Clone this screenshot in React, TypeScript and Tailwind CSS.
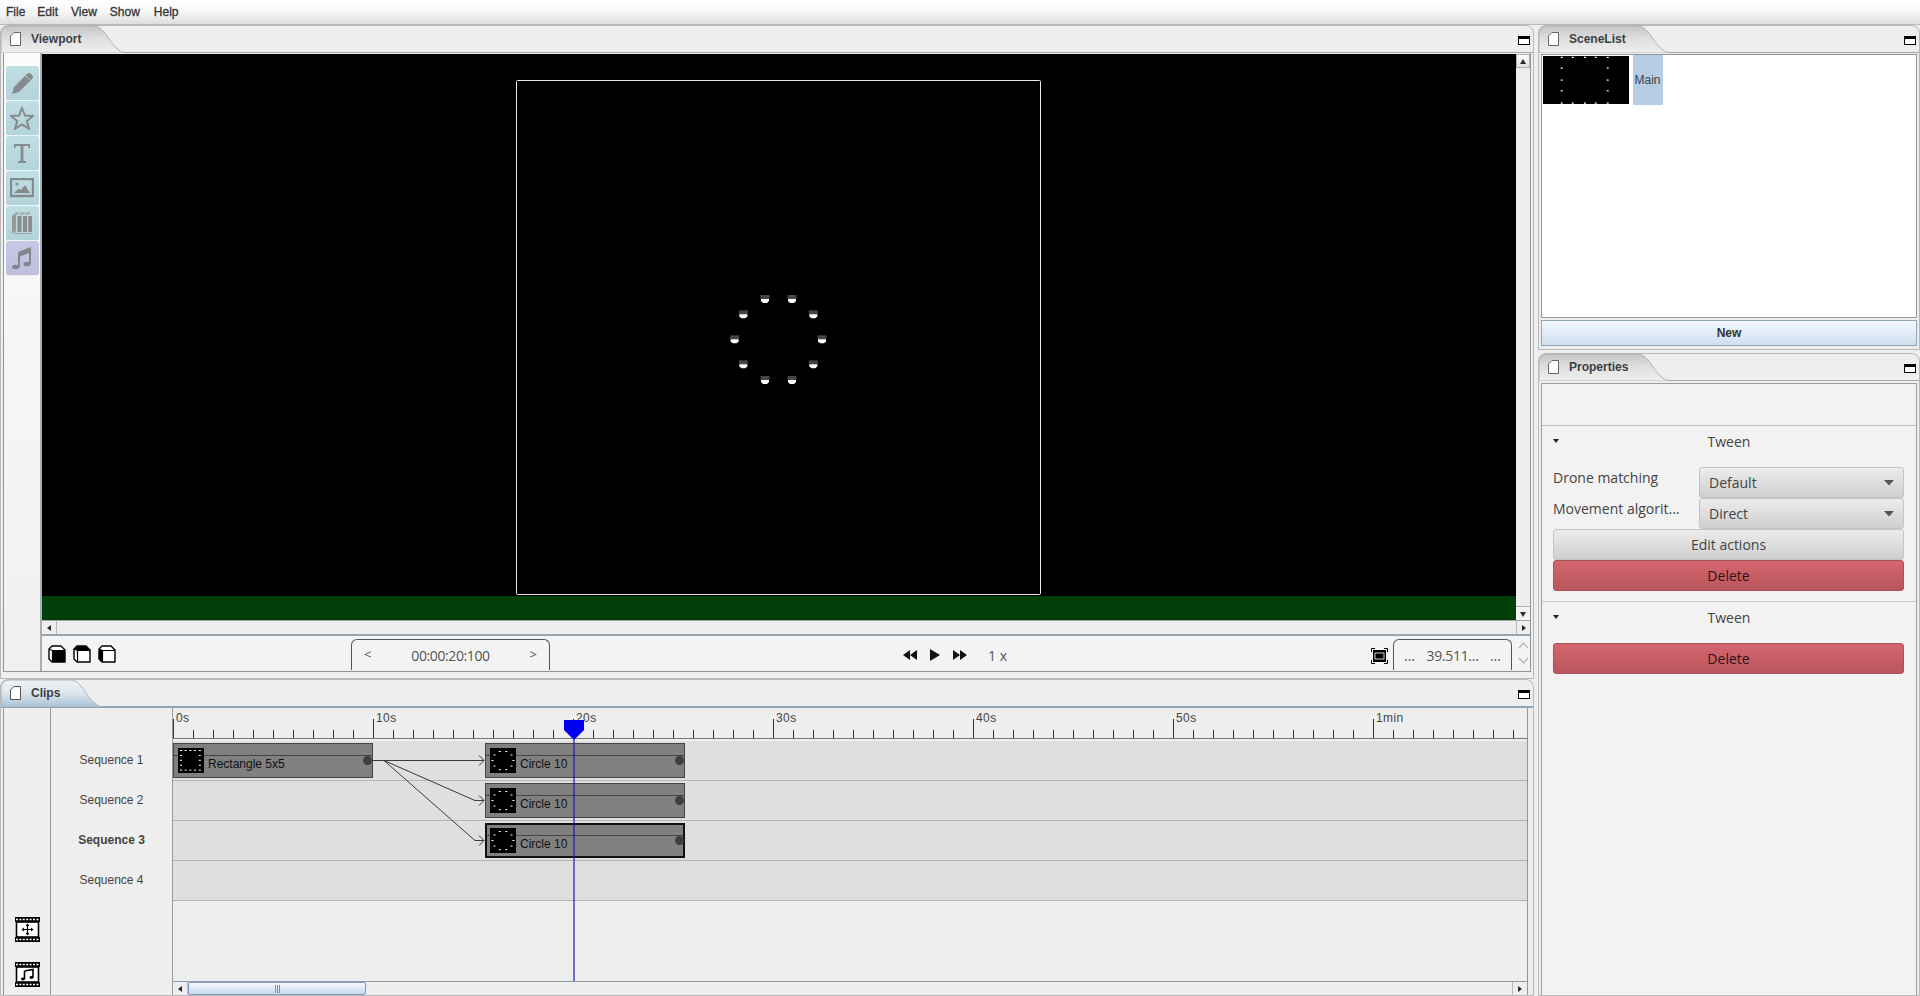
import React from "react";

const ui = "font-['Open_Sans',sans-serif]";

function DocIcon({ active = false }: { active?: boolean }) {
  return (
    <svg width="11" height="14" viewBox="0 0 11 14" className="shrink-0">
      <path d="M0.5 4 L4 0.5 H10.5 V13.5 H0.5 Z" fill="#fff" stroke={active ? "#555" : "#666"} strokeWidth="1" />
    </svg>
  );
}

function MinIcon() {
  return <div className="h-[9px] w-[12px] border border-black border-t-[3px] bg-white" />;
}

function Tab({ label, width, active = false, gid }: { label: string; width: number; active?: boolean; gid: string }) {
  const w = width;
  return (
    <div className="relative flex h-full items-center pl-[9px]" style={{ width: w }}>
      <svg width={w} height="27" className="absolute left-0 top-0">
        <defs>
          <linearGradient id={gid} x1="0" x2="0" y1="0" y2="1">
            <stop offset="0" stopColor={active ? "#eef3f6" : "#c4c4c4"} />
            <stop offset="0.45" stopColor={active ? "#dfe8ee" : "#dedede"} />
            <stop offset="1" stopColor={active ? "#a9c3d6" : "#f0f0f0"} />
          </linearGradient>
        </defs>
        <path
          d={`M0 27 V9 Q0 0 9 0 H${w - 30} C${w - 18} 2 ${w - 14} 24 ${w} 27 Z`}
          fill={`url(#${gid})`}
          stroke="#b4b4b4"
          strokeWidth="1"
        />
      </svg>
      <div className="relative flex items-center gap-[10px]">
        <DocIcon active={active} />
        <span className="text-[12px] font-bold text-[#3a3f45]">{label}</span>
      </div>
    </div>
  );
}

function Dock({
  label,
  tabWidth,
  active = false,
  className,
  gid,
  children,
}: {
  label: string;
  tabWidth: number;
  active?: boolean;
  className: string;
  gid: string;
  children: React.ReactNode;
}) {
  return (
    <div className={`flex flex-col rounded-t-[8px] border border-[#b8b8b8] bg-[#eeeeee] ${className}`}>
      <div
        className={`flex shrink-0 items-start justify-between ${
          active ? "h-[28px] border-b-[2px] border-[#8fa5b8]" : "h-[27px] border-b border-[#a2a9af]"
        }`}
      >
        <Tab label={label} width={tabWidth} active={active} gid={gid} />
        <div className="mr-[3px] mt-[10px]">
          <MinIcon />
        </div>
      </div>
      <div className="flex min-h-0 flex-1 flex-col px-[2px]">{children}</div>
    </div>
  );
}

function Tri({ dir, size = 8 }: { dir: "u" | "d" | "l" | "r"; size?: number }) {
  const p = { u: "M1 7 L4 2 L7 7Z", d: "M1 2 L7 2 L4 7Z", l: "M6 1 L6 7 L2 4Z", r: "M2 1 L2 7 L6 4Z" }[dir];
  return (
    <svg width={size} height={size} viewBox="0 0 8 8">
      <path d={p} fill="#2a2a2a" />
    </svg>
  );
}

function Pencil() {
  return (
    <svg width="24" height="24" viewBox="0 0 24 24">
      <path d="M2 23 L4 16 L17 3 Q19 1 21 3 L22 4 Q24 6 22 8 L9 21 Z" fill="#858a8c" />
      <path d="M15.5 4.5 L20.5 9.5" stroke="#b8d6dc" strokeWidth="1" />
    </svg>
  );
}
function Star() {
  return (
    <svg width="24" height="24" viewBox="0 0 24 24">
      <path d="M12 2 L15 9.5 L23 10 L16.8 15 L19 22.8 L12 18.4 L5 22.8 L7.2 15 L1 10 L9 9.5 Z" fill="none" stroke="#858a8c" strokeWidth="2" />
    </svg>
  );
}
function TIcon() {
  return (
    <svg width="24" height="24" viewBox="0 0 24 24">
      <path d="M4 7 V3 H20 V7 H18.4 V5 H13.4 V20 H16 V22 H8 V20 H10.6 V5 H5.6 V7 Z" fill="#858a8c" />
    </svg>
  );
}
function ImageIcon() {
  return (
    <svg width="24" height="20" viewBox="0 0 24 20">
      <rect x="1" y="1" width="22" height="17" fill="none" stroke="#858a8c" strokeWidth="2.4" />
      <circle cx="7" cy="6" r="1.6" fill="#858a8c" />
      <path d="M4 15 L9 10.5 L11 12 L15 7 L20 15 Z" fill="#858a8c" />
    </svg>
  );
}
function FilmStack() {
  return (
    <svg width="22" height="24" viewBox="0 0 22 24">
      <path d="M1 5 L5 1 V20 L1 23 Z" fill="#97999b" />
      <path d="M6.5 5 H10.5 V21 H6.5 Z M12 5 H16 V21 H12 Z M17.2 5 H21 V21 H17.2 Z" fill="#8a8d8f" />
      <path d="M5 1 H9 L6.5 4 H2 Z M10.6 1 H14.6 L12 4 H8 Z M16 1 H20 L17.2 4 H13.4 Z" fill="#aaaeb0" />
      <path d="M4 22.5 H21" stroke="#8a8d8f" strokeDasharray="1.5 1" strokeWidth="1" />
    </svg>
  );
}
function Music() {
  return (
    <svg width="22" height="24" viewBox="0 0 22 24">
      <path d="M7 6 L20 1 V18 H18 V7 L9 10.5 V21 H7 Z" fill="#858590" />
      <ellipse cx="4.6" cy="21" rx="3.6" ry="2.2" fill="#858590" />
      <ellipse cx="16" cy="18" rx="3.6" ry="2.2" fill="#858590" />
    </svg>
  );
}

function ToolBtn({ children, music = false }: { children: React.ReactNode; music?: boolean }) {
  return (
    <div
      className={`flex h-[35px] w-[33px] items-center justify-center rounded-[3px] border-b border-white/70 ${
        music ? "bg-[linear-gradient(#c9c9e6,#bdbddd)]" : "bg-[linear-gradient(#c0dfe4,#b3d3da)]"
      }`}
    >
      {children}
    </div>
  );
}

function Cube({ mode }: { mode: number }) {
  return (
    <svg width="18" height="18" viewBox="0 0 18 18">
      <path d="M1 4 L4 1 H13 L17 5 V17 H4 L1 14 Z" fill="#fff" stroke="#000" strokeWidth="1.4" strokeLinejoin="round" />
      <path d="M1 4 L4.5 5.5 H17 M4.5 5.5 V17" fill="none" stroke="#000" strokeWidth="1.2" />
      {mode === 0 && <rect x="5" y="6" width="12" height="11" fill="#000" />}
      {mode === 1 && <path d="M1 4 L4 1 H13 L17 5 H4.5 Z" fill="#000" />}
      {mode === 2 && <path d="M1 4 L4.5 5.5 V17 L1 14 Z" fill="#000" />}
    </svg>
  );
}

function Rewind({ flip = false }: { flip?: boolean }) {
  return (
    <svg width="14" height="10" viewBox="0 0 14 10" className={flip ? "-scale-x-100" : ""}>
      <path d="M7 0 V10 L0 5 Z M14 0 V10 L7 5 Z" fill="#111" />
    </svg>
  );
}

function FitIcon() {
  return (
    <svg width="17" height="16" viewBox="0 0 17 16">
      <path d="M0.5 4 V0.5 H4 M13 0.5 H16.5 V4 M16.5 12 V15.5 H13 M4 15.5 H0.5 V12" fill="none" stroke="#000" />
      <rect x="2.5" y="2.5" width="12" height="11" fill="#000" stroke="#000" />
      <rect x="4" y="5" width="9" height="6" fill="#000" stroke="#fff" strokeWidth="0.8" />
    </svg>
  );
}

const drones: [number, number][] = [
  [195, 57], [276, 57], [130, 103], [340, 103], [104, 178],
  [366, 178], [130, 253], [340, 253], [195, 300], [276, 300],
];

function Viewport() {
  return (
    <div className="relative flex min-w-0 flex-1 flex-col bg-black">
      <div className="flex-1" />
      <div className="h-[24px] bg-[#003f0a]" />
      <svg width="1474" height="566" className="absolute left-0 top-0">
        <rect x="474.5" y="26.5" width="524" height="514" rx="1" fill="none" stroke="#e8e8e8" />
        {drones.map(([zx, zy], i) => {
          const cx = 700 + zx / 3 - 42;
          const cy = 280 + zy / 3 - 54;
          return (
            <g key={i}>
              <rect x={cx - 4.5} y={cy - 4} width="9" height="4" fill="#454545" />
              <path d={`M${cx - 4} ${cy} H${cx + 4} V${cy + 2} L${cx + 2} ${cy + 4} H${cx - 2} L${cx - 4} ${cy + 2} Z`} fill="#fff" />
            </g>
          );
        })}
      </svg>
    </div>
  );
}

function ViewportDock() {
  const tools = [<Pencil />, <Star />, <TIcon />, <ImageIcon />, <FilmStack />];
  return (
    <div className="flex h-[619px] border-x border-b border-[#8f979e]">
      <div className="flex w-[38px] shrink-0 flex-col items-center border-r-[2px] border-[#a9afb4] bg-[linear-gradient(#fbfbfb,#f0f0f0)] pt-[13px]">
        {tools.map((t, i) => (
          <ToolBtn key={i}>{t}</ToolBtn>
        ))}
        <ToolBtn music>
          <Music />
        </ToolBtn>
      </div>
      <div className="flex min-w-0 flex-1 flex-col pt-[1px]">
        <div className="flex h-[566px]">
          <Viewport />
          <div className="flex w-[14px] shrink-0 flex-col justify-between bg-[#eeeeee]">
            <div className="flex h-[14px] items-center justify-center border border-[#aab0b6] bg-[linear-gradient(#fdfdfd,#e0e0e0)]">
              <Tri dir="u" />
            </div>
            <div className="flex h-[14px] items-center justify-center border-t border-[#aab0b6] bg-[#f4f4f4]">
              <Tri dir="d" />
            </div>
          </div>
        </div>
        <div className="flex h-[16px] shrink-0 justify-between border-b-[2px] border-t border-[#9aa4ac] bg-[#eeeeee]">
          <div className="flex w-[15px] items-center justify-center border-r border-[#b5bbc0]">
            <Tri dir="l" />
          </div>
          <div className="flex w-[14px] items-center justify-center border-l border-[#b5bbc0]">
            <Tri dir="r" />
          </div>
        </div>
        <div className={`flex h-[34px] items-center bg-[#f4f4f4] ${ui}`}>
          <div className="ml-[6px] mt-[2px] flex gap-[7px]">
            <Cube mode={0} />
            <Cube mode={1} />
            <Cube mode={2} />
          </div>
          <div className="ml-[235px] flex h-[31px] w-[199px] items-center justify-between self-end rounded-t-[6px] border-x border-t border-[#555] px-[12px] text-[13px] text-[#555]">
            <span>&lt;</span>
            <span className="text-[14px] tracking-[-0.4px]">00:00:20:100</span>
            <span>&gt;</span>
          </div>
          <div className="ml-[353px] mt-[4px] flex items-center gap-[13px]">
            <Rewind />
            <svg width="10" height="12" viewBox="0 0 10 12">
              <path d="M0 0 V12 L10 6 Z" fill="#111" />
            </svg>
            <Rewind flip />
          </div>
          <span className="ml-[21px] mt-[4px] w-[18px] whitespace-nowrap text-[14px] text-[#555]">1 x</span>
          <div className="ml-[365px] mt-[5px]">
            <FitIcon />
          </div>
          <div className="ml-[5px] flex h-[31px] w-[119px] items-center justify-between self-end rounded-t-[6px] border-x border-t border-[#555] px-[10px] text-[14px] text-[#555]">
            <span>...</span>
            <span className="tracking-[-0.3px]">39.511...</span>
            <span>...</span>
          </div>
          <div className="ml-[5px] flex h-full w-[13px] flex-col justify-between py-[5px]">
            <svg width="13" height="8" viewBox="0 0 13 8">
              <path d="M2 7 L6.5 2 L11 7" fill="none" stroke="#b5b5b5" strokeWidth="1.2" />
            </svg>
            <svg width="13" height="8" viewBox="0 0 13 8">
              <path d="M2 1 L6.5 6 L11 1" fill="none" stroke="#b5b5b5" strokeWidth="1.2" />
            </svg>
          </div>
        </div>
      </div>
    </div>
  );
}

function Thumb({ kind }: { kind: "rect" | "circle" }) {
  const pts: [number, number][] = [];
  if (kind === "rect") {
    for (let i = 0; i < 5; i++)
      for (let j = 0; j < 5; j++) if (i === 0 || j === 0 || i === 4 || j === 4) pts.push([3 + i * 4.7, 2.5 + j * 4.9]);
  } else {
    for (let i = 0; i < 10; i++) {
      const a = (Math.PI * 2 * (i + 0.5)) / 10;
      pts.push([13 + 10.5 * Math.sin(a), 12.5 + 9.5 * Math.cos(a)]);
    }
  }
  return (
    <svg width="26" height="25" viewBox="0 0 26 25" className="shrink-0">
      <rect width="26" height="25" fill="#000" />
      {pts.map(([x, y], i) => (
        <rect key={i} x={x - 1} y={y - 0.5} width="2" height="1" fill="#fff" />
      ))}
    </svg>
  );
}

function Clip({ kind, label, left, width, selected = false }: { kind: "rect" | "circle"; label: string; left: string; width: string; selected?: boolean }) {
  return (
    <div
      className={`absolute top-[2px] h-[35px] ${left} ${width} bg-[#808080] ${
        selected ? "border-[2px] border-[#111]" : "border border-[#444]"
      }`}
    >
      <div className={`absolute inset-x-0 h-px bg-[#444] ${selected ? "top-[10px]" : "top-[11px]"}`} />
      <div className={`absolute h-[9px] w-[9px] rounded-full bg-[#3f3f3f] ${selected ? "right-[-1px] top-[11px]" : "right-0 top-[12px]"}`} />
      <div className={`relative flex items-center ${selected ? "pl-[3px] pt-[3px]" : "pl-[4px] pt-[4px]"}`}>
        <Thumb kind={kind} />
        <span className="ml-[4px] mt-[6px] text-[12px] text-[#111]">{label}</span>
      </div>
    </div>
  );
}

function FilmFrame({ children }: { children: React.ReactNode }) {
  return (
    <svg width="25" height="25" viewBox="0 0 25 25">
      <rect x="0" y="0" width="25" height="5" fill="#000" />
      <rect x="0" y="20" width="25" height="5" fill="#000" />
      <path d="M1 2.5 H24 M1 22.5 H24" stroke="#fff" strokeWidth="1.4" strokeDasharray="2 1.4" />
      <rect x="1.5" y="5" width="22" height="15" fill="#fff" stroke="#000" strokeWidth="1.6" />
      {children}
    </svg>
  );
}

const ticks = ["0s", "10s", "20s", "30s", "40s", "50s", "1min"];

function ClipsPanel() {
  return (
    <div className="flex min-h-0 flex-1 border-l border-[#8f979e]">
      <div className="flex w-[46px] shrink-0 flex-col items-center justify-end gap-[20px] pb-[8px]">
        <FilmFrame>
          <path d="M12.5 7 V18 M7 12.5 H18" stroke="#000" strokeWidth="1.2" />
          <path d="M12.5 6.5 L10.5 9 H14.5 Z M12.5 18.5 L10.5 16 H14.5 Z M6.5 12.5 L9 10.5 V14.5 Z M18.5 12.5 L16 10.5 V14.5 Z" fill="#000" />
        </FilmFrame>
        <FilmFrame>
          <path d="M9.5 9 L18 7.5 V15.5 M9.5 9 V17" fill="none" stroke="#000" strokeWidth="1.6" />
          <ellipse cx="8" cy="17" rx="2" ry="1.4" fill="#000" />
          <ellipse cx="16.5" cy="15.5" rx="2" ry="1.4" fill="#000" />
        </FilmFrame>
      </div>
      <div className="flex w-[123px] shrink-0 flex-col border-x-[1px] border-[#9a9a9a] pt-[32px]">
        {["Sequence 1", "Sequence 2", "Sequence 3", "Sequence 4"].map((s, i) => (
          <div key={s} className={`flex h-[40px] items-center justify-center text-[12px] text-[#444] ${i === 2 ? "font-bold" : ""}`}>
            {s}
          </div>
        ))}
      </div>
      <div className="relative flex w-[1355px] shrink-0 flex-col border-r border-[#8f979e]">
        <div className="flex h-[31px] shrink-0 overflow-hidden border-b border-[#777] bg-[#eeeeee] bg-[repeating-linear-gradient(90deg,#333_0_1px,transparent_1px_20px)] bg-[length:100%_8px] bg-bottom bg-no-repeat">
          {ticks.map((t) => (
            <div key={t} className="h-full w-[200px] shrink-0 pl-[3px] pt-[3px]">
              <div className="absolute mt-[8px] ml-[-3px] h-[19px] w-px bg-[#333]" />
              <div className="text-[12px] leading-[14px] tracking-[0.4px] text-[#444]">{t}</div>
            </div>
          ))}
        </div>
        <div className="mt-[2px] flex flex-col">
          <div className="relative h-[40px] border-b border-[#b5b5b5] bg-[#dfdfdf]">
            <Clip kind="rect" label="Rectangle 5x5" left="left-0" width="w-[200px]" />
            <Clip kind="circle" label="Circle 10" left="left-[312px]" width="w-[200px]" />
          </div>
          <div className="relative h-[40px] border-b border-[#b5b5b5] bg-[#dfdfdf]">
            <Clip kind="circle" label="Circle 10" left="left-[312px]" width="w-[200px]" />
          </div>
          <div className="relative h-[40px] border-b border-[#b5b5b5] bg-[#dfdfdf]">
            <Clip kind="circle" label="Circle 10" left="left-[312px]" width="w-[200px]" selected />
          </div>
          <div className="relative h-[40px] border-b border-[#b5b5b5] bg-[#dfdfdf]" />
        </div>
        <div className="flex-1" />
        <div className="z-10 flex h-[14px] shrink-0 border-t border-[#8f9ba6] bg-[#eeeeee]">
          <div className="flex w-[15px] items-center justify-center border-r border-[#b5bbc0]">
            <Tri dir="l" />
          </div>
          <div className="flex w-[178px] items-center justify-center gap-px rounded-[2px] border border-[#7f9bc4] bg-[linear-gradient(#f6f9fd,#c8d9ee)]">
            <div className="h-[8px] w-px bg-[#8a8f95]" />
            <div className="h-[8px] w-px bg-[#8a8f95]" />
            <div className="h-[8px] w-px bg-[#8a8f95]" />
          </div>
          <div className="flex-1" />
          <div className="flex w-[15px] items-center justify-center border-l border-[#b5bbc0]">
            <Tri dir="r" />
          </div>
        </div>
        <svg width="1355" height="274" className="pointer-events-none absolute left-0 top-0">
          <g fill="none" stroke="#3a3a3a" strokeWidth="1">
            <path d="M200 52.5 H311" />
            <path d="M211 52.5 L302 92.5 H311" />
            <path d="M211 52.5 L302 132.5 H311" />
            <path d="M306 47.5 L311 52.5 L306 57.5" />
            <path d="M306 87.5 L311 92.5 L306 97.5" />
            <path d="M306 127.5 L311 132.5 L306 137.5" />
          </g>
          <path d="M401 12 V274" stroke="#1a1ab0" strokeWidth="1.2" />
          <path d="M391 12 H411 V22 L401 32 L391 22 Z" fill="#0000f0" />
        </svg>
      </div>
    </div>
  );
}

function SceneThumb() {
  const xs = [18.7, 29.7, 42, 52.7, 64.7];
  const ys = [1.3, 12, 24, 34.7, 47];
  const pts: [number, number][] = [];
  xs.forEach((x, i) =>
    ys.forEach((y, j) => {
      if (i === 0 || j === 0 || i === 4 || j === 4) pts.push([x, y]);
    })
  );
  return (
    <svg width="86" height="48" viewBox="0 0 86 48" className="shrink-0">
      <rect width="86" height="48" fill="#000" />
      {pts.map(([x, y], i) => (
        <rect key={i} x={x - 1} y={y - 0.5} width="2" height="1.2" fill="#fff" />
      ))}
    </svg>
  );
}

function Combo({ label }: { label: string }) {
  return (
    <div className="flex h-[31px] w-[205px] items-center justify-between rounded-[3px] border border-[#c4c4c4] bg-[linear-gradient(#ececec,#cfcfcf)] pl-[9px] pr-[9px] text-[14px] text-[#444]">
      <span>{label}</span>
      <svg width="10" height="6" viewBox="0 0 10 6">
        <path d="M0 0 H10 L5 5.5 Z" fill="#555" />
      </svg>
    </div>
  );
}

function DeleteBtn() {
  return (
    <div className="flex h-[31px] items-center justify-center rounded-[3px] border border-[#a8525a] bg-[linear-gradient(#d4666e,#b9565d)] text-[14px] text-[#2e1216]">
      Delete
    </div>
  );
}

function SectionHead() {
  return (
    <div className="relative flex h-[32px] items-center justify-center pb-[2px] text-[14px] text-[#444]">
      <svg width="6" height="4" viewBox="0 0 6 4" className="absolute left-[11px] top-[13px]">
        <path d="M0 0 H6 L3 4 Z" fill="#222" />
      </svg>
      Tween
    </div>
  );
}

function Properties() {
  return (
    <div className={`flex min-h-0 flex-1 flex-col border-x border-t border-[#98a0a6] bg-[#f2f2f2] ${ui}`}>
      <div className="h-[42px] shrink-0 border-b border-[#bdbdbd]" />
      <div className="h-[176px] shrink-0 border-b border-[#c8c8c8]">
        <SectionHead />
        <div className="mt-[9px] flex flex-col pl-[11px] pr-[12px]">
          <div className="flex h-[31px] justify-between">
            <span className="text-[14px] leading-[22px] text-[#444]">Drone matching</span>
            <Combo label="Default" />
          </div>
          <div className="flex h-[31px] justify-between">
            <span className="text-[14px] leading-[22px] text-[#444]">Movement algorit...</span>
            <Combo label="Direct" />
          </div>
          <div className="flex h-[31px] items-center justify-center rounded-[3px] border border-[#c4c4c4] bg-[linear-gradient(#ececec,#cfcfcf)] text-[14px] text-[#444]">
            Edit actions
          </div>
          <DeleteBtn />
        </div>
      </div>
      <div>
        <SectionHead />
        <div className="mt-[9px] pl-[11px] pr-[12px]">
          <DeleteBtn />
        </div>
      </div>
    </div>
  );
}

export default function App() {
  return (
    <div className="flex h-[996px] w-[1920px] flex-col overflow-hidden bg-[#eeeeee] font-['Liberation_Sans',Arial,sans-serif]">
      <div className="flex h-[25px] shrink-0 items-center gap-[12px] border-b border-[#b8b8b8] bg-[linear-gradient(#ffffff,#f6f6f6_50%,#dedede)] pl-[6px] text-[12px] text-[#333] [-webkit-text-stroke:0.3px_#333]">
        <span>File</span>
        <span>Edit</span>
        <span className="ml-[1px] mr-[1px]">View</span>
        <span className="mr-[2px]">Show</span>
        <span>Help</span>
      </div>
      <div className="flex min-h-0 flex-1">
        <div className="flex w-[1534px] shrink-0 flex-col">
          <Dock label="Viewport" tabWidth={124} gid="t1" className="h-[654px]">
            <ViewportDock />
          </Dock>
          <Dock label="Clips" tabWidth={101} active gid="t2" className="flex-1">
            <ClipsPanel />
          </Dock>
        </div>
        <div className="ml-[4px] flex flex-1 flex-col">
          <Dock label="SceneList" tabWidth={130} gid="t3" className="h-[325px]">
            <div className="mt-[1px] flex h-[264px] shrink-0 border border-[#8f979e] bg-white pl-[1px] pt-[1px]">
              <SceneThumb />
              <div className="-mt-[1px] ml-[4px] flex h-[50px] w-[30px] items-center justify-center bg-[#b8cce4] pr-[1px] text-[12px] text-[#3a4450]">Main</div>
            </div>
            <div className="mt-[2px] flex h-[26px] items-center justify-center border border-[#8fa5b8] bg-[linear-gradient(#f4f8fc,#cddff0)] text-[12px] font-bold text-[#333]">
              New
            </div>
          </Dock>
          <Dock label="Properties" tabWidth={130} gid="t4" className="mt-[3px] flex-1">
            <div className="mt-[2px] flex min-h-0 flex-1 flex-col">
              <Properties />
            </div>
          </Dock>
        </div>
      </div>
    </div>
  );
}
